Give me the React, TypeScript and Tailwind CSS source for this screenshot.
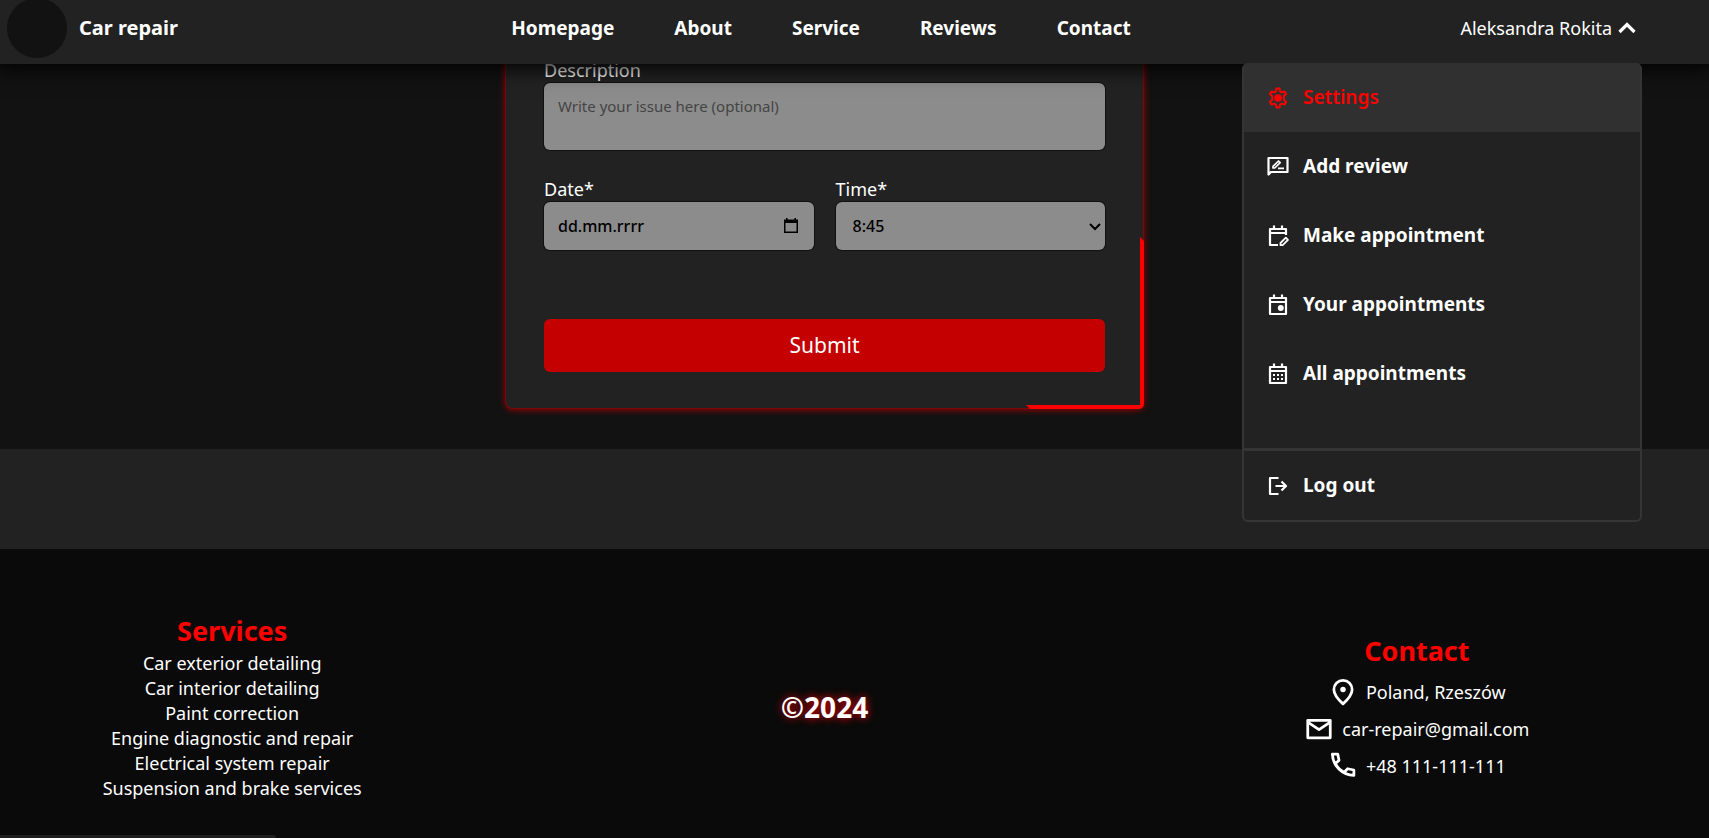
import type { ReactNode } from "react";

type IconProps = { children: ReactNode; className?: string };

function Icon({ children, className = "size-6" }: IconProps) {
  return (
    <svg
      viewBox="0 0 24 24"
      fill="none"
      stroke="currentColor"
      strokeWidth="2.2"
      strokeLinejoin="round"
      className={className}
      aria-hidden="true"
    >
      {children}
    </svg>
  );
}

const gear = (
  <Icon>
    <path
      strokeWidth="2"
      d="M10.500 2.500h3l.6 3 1.500.9 2.900-1 1.600 2.700-2.300 2v3.800l2.300 2-1.600 2.700-2.900-1-1.500.9-.6 3h-3l-.6-3-1.500-.9-2.900 1-1.600-2.700 2.300-2v-3.800l-2.300-2 1.600-2.700 2.900 1 1.500-.9z"
    />
    <circle cx="12" cy="12" r="3.8" fill="currentColor" stroke="none" />
  </Icon>
);

const review = (
  <Icon>
    <path d="M2.500 19.500V3h19v14H5z" />
    <path strokeWidth="1.7" d="M7 13v-1.700L12.500 6l1.700 1.700L8.700 13zM12 13.300h6" />
  </Icon>
);

const calendarTop = <path d="M8 1.500V5M16 1.500V5M4 9h16" />;

const calendarEdit = (
  <Icon>
    {calendarTop}
    <path d="M20 11V5H4v16h8" />
    <path strokeWidth="1.8" d="M14.500 21.200v-2.200l5.300-5.300 2.200 2.200-5.300 5.300z" />
  </Icon>
);

const calendarDot = (
  <Icon>
    {calendarTop}
    <path d="M4 5h16v16H4z" />
    <circle cx="14.800" cy="15" r="3" fill="currentColor" stroke="none" />
  </Icon>
);

const calendarGrid = (
  <Icon>
    {calendarTop}
    <path d="M4 5h16v16H4z" />
    <path d="M7 13h2m2 0h2m2 0h2M7 17h2m2 0h2m2 0h2" />
  </Icon>
);

const logOut = (
  <Icon>
    <path d="M12.500 4H4v16h8.500M9.500 12H20M15.500 7.500 20 12l-4.500 4.500" />
  </Icon>
);

const menuItems = [
  { label: "Add review", icon: review },
  { label: "Make appointment", icon: calendarEdit },
  { label: "Your appointments", icon: calendarDot },
  { label: "All appointments", icon: calendarGrid },
];

const navLinks = ["Homepage", "About", "Service", "Reviews", "Contact"];

const services = [
  "Car exterior detailing",
  "Car interior detailing",
  "Paint correction",
  "Engine diagnostic and repair",
  "Electrical system repair",
  "Suspension and brake services",
];

function Header() {
  return (
    <header className="relative z-10 grid h-16 grid-cols-[1fr_auto_1fr] content-center items-center bg-[#222] pr-[67px] pb-2 shadow-[0_0_20px_4px_#000]">
      <a href="#home" className="flex items-center gap-3 pl-[7px] text-xl font-bold">
        <span className="size-[60px] rounded-full bg-[#121212]" />
        Car repair
      </a>
      <nav className="flex gap-[60px] text-[19px] font-bold">
        {navLinks.map((link) => (
          <a key={link} href={`#${link.toLowerCase()}`}>
            {link}
          </a>
        ))}
      </nav>
      <div className="justify-self-end">
        <button type="button" aria-expanded="true" className="flex items-center gap-1.5 pr-1.5 text-lg">
          Aleksandra Rokita
          <svg viewBox="0 0 18 12" className="h-3 w-[18px]" fill="none" stroke="currentColor" strokeWidth="3.2" aria-hidden="true">
            <path d="M1.500 10 9 2.500l7.500 7.500" />
          </svg>
        </button>
      </div>
      <div className="absolute top-[63px] right-[67px] w-[400px] rounded-md border-2 border-t-0 border-[#353535] bg-[#222] text-[19px] font-bold">
        <a href="#settings" className="flex h-[69px] items-center gap-[13px] rounded-t-sm bg-[#303030] pl-[22px] font-semibold text-[#f00]">
          {gear}
          Settings
        </a>
        <div className="pb-10">
          {menuItems.map((item) => (
            <a key={item.label} href="#menu" className="flex h-[69px] items-center gap-[13px] pl-[22px]">
              {item.icon}
              {item.label}
            </a>
          ))}
        </div>
        <a href="#logout" className="flex h-[72px] items-center gap-[13px] border-t-3 border-[#353535] pl-[22px]">
          {logOut}
          Log out
        </a>
      </div>
    </header>
  );
}

function AppointmentForm() {
  return (
    <section className="-mt-1.5 bg-[#121212] pr-[60px] pb-10">
      <form className="relative mx-auto w-full max-w-[639px] rounded-b-lg border border-t-0 border-[#7a0808] bg-[#222] px-[38px] pb-9 shadow-[0_1px_6px_#a00000]">
        <label htmlFor="description" className="block text-lg leading-[25px]">
          Description
        </label>
        <textarea
          id="description"
          placeholder="Write your issue here (optional)"
          className="block h-[67px] w-full resize-none rounded-md bg-[#8c8c8c] px-3.5 py-3 text-[15px] leading-[22px] text-black shadow-[0_0_0_1px_#111] placeholder:text-[#444]"
        />
        <div className="grid grid-cols-2 gap-[22px] pt-[27px]">
          <div>
            <label htmlFor="date" className="block text-lg leading-[25px]">
              Date*
            </label>
            <div className="flex h-12 items-center rounded-md bg-[#8c8c8c] px-3.5 shadow-[0_0_0_1px_#111]">
              <input id="date" placeholder="dd.mm.rrrr" className="min-w-0 flex-1 text-base font-medium text-black placeholder:text-black" />
              <button type="button" aria-label="Open calendar" className="text-black">
                <svg viewBox="0 0 18 18" className="size-[18px]" fill="currentColor" aria-hidden="true">
                  <path fillRule="evenodd" d="M4 1h1.500v1.500h7V1H14v1.500h2V16H2V2.500h2zM3.500 6v8.500h11V6z" />
                </svg>
              </button>
            </div>
          </div>
          <div>
            <label htmlFor="time" className="block text-lg leading-[25px]">
              Time*
            </label>
            <div className="relative">
              <select
                id="time"
                className="block h-12 w-full appearance-none rounded-md bg-[#8c8c8c] px-[17px] text-base font-medium text-black shadow-[0_0_0_1px_#111]"
              >
                <option>8:45</option>
              </select>
              <svg viewBox="0 0 12 8" className="pointer-events-none absolute top-[21px] right-1 h-2 w-3 text-black" fill="none" stroke="currentColor" strokeWidth="2" aria-hidden="true">
                <path d="M1 1l5 5 5-5" />
              </svg>
            </div>
          </div>
        </div>
        <button type="submit" className="mt-[69px] block h-[53px] w-full rounded-md bg-[#c40000] text-[21px]">
          Submit
        </button>
        <svg viewBox="0 0 118 172" className="absolute -right-px -bottom-px h-[172px] w-[118px]" fill="#f00" aria-hidden="true">
          <path d="M114 0l4 4v162q0 6-6 6H4l-4-4h114z" />
        </svg>
      </form>
    </section>
  );
}

function Footer() {
  return (
    <footer className="relative grid flex-1 grid-cols-3 items-center gap-x-32 bg-[#0a0a0a] pr-[60px] pt-[26px]">
      <section className="flex flex-col items-center">
        <h2 className="mb-0.5 text-[27px] leading-9 font-bold text-[#f00]">Services</h2>
        <ul className="text-center text-lg leading-[25px]">
          {services.map((service) => (
            <li key={service}>{service}</li>
          ))}
        </ul>
      </section>
      <p className="text-center text-[28px] font-bold [text-shadow:0_0_8px_#f00]">©2024</p>
      <section className="flex flex-col items-center pt-1 text-lg">
        <h2 className="mb-1 text-[27px] leading-9 font-bold text-[#f00]">Contact</h2>
        <p className="flex h-[37px] items-center gap-2">
          <Icon className="size-[30px]">
            <path d="M12 21.500C7 17 4.700 13.500 4.700 10a7.300 7.300 0 0 1 14.600 0c0 3.500-2.300 7-7.300 11.500z" />
            <circle cx="12" cy="10" r="2.200" fill="currentColor" stroke="none" />
          </Icon>
          Poland, Rzeszów
        </p>
        <a href="mailto:car-repair@gmail.com" className="flex h-[37px] items-center gap-2">
          <Icon className="size-[30px]">
            <path d="M3 5h18v14H3zM3 6.500l9 6 9-6" />
          </Icon>
          car-repair@gmail.com
        </a>
        <a href="tel:+48111111111" className="flex h-[37px] items-center gap-2">
          <Icon className="size-[30px]">
            <path d="M3.500 2.500h4.300l1 5L6 10a16 16 0 0 0 7 7l2.700-2.800 5 1v4.300A17.500 17.500 0 0 1 3.500 2.500z" />
          </Icon>
          +48 111-111-111
        </a>
      </section>
      <div className="absolute bottom-0 left-0 h-[3px] w-[276px] rounded-tr-md bg-[#1f1f1f]" />
    </footer>
  );
}

export default function App() {
  return (
    <div className="flex min-h-screen flex-col bg-[#121212] font-['Noto_Sans',sans-serif] text-white">
      <Header />
      <AppointmentForm />
      <div className="h-[100px] bg-[#222]" />
      <Footer />
    </div>
  );
}
